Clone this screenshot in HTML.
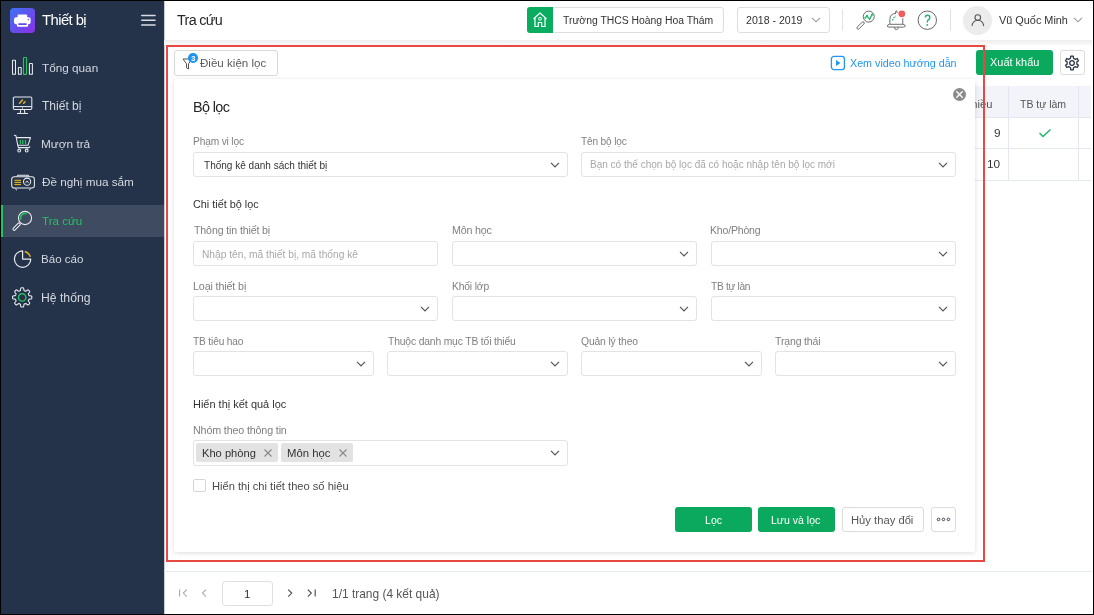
<!DOCTYPE html>
<html><head><meta charset="utf-8">
<style>
*{box-sizing:border-box;margin:0;padding:0}
html,body{width:1094px;height:615px;overflow:hidden;background:#000}
body{position:relative;font-family:"Liberation Sans",sans-serif;color:#333}
.a{position:absolute}
.t{position:absolute;white-space:nowrap;line-height:1;will-change:transform}
.nt{position:absolute;left:42px;white-space:nowrap;line-height:1;font-size:13px;color:#d9dde4}
.box{position:absolute;border:1px solid #e3e3e3;border-radius:3px;background:#fff}
.lbl{position:absolute;white-space:nowrap;line-height:1;font-size:10.5px;color:#8a8a8a}
.chev{position:absolute}
.btn{position:absolute;border-radius:3px}
</style></head><body>
<div class="a" style="left:1px;top:1px;width:1092px;height:613px;background:#fff"></div>

<!-- SIDEBAR -->
<div class="a" style="left:1px;top:1px;width:163px;height:613px;background:#243349"></div>
<div class="a" style="left:10px;top:8px;width:25px;height:25px;border-radius:4px;background:linear-gradient(135deg,#3b74f3,#8c2ee6)"></div>
<svg class="a" style="left:10px;top:8px" width="25" height="25" viewBox="0 0 25 25">
 <rect x="7.6" y="6.4" width="9.6" height="3.6" rx="1" fill="#fff"/>
 <rect x="4" y="9.3" width="16.7" height="7" rx="2.2" fill="#fff"/>
 <rect x="6.9" y="14" width="11.2" height="4.8" rx="1" fill="#fff"/>
 <rect x="8.3" y="15.2" width="8.4" height="1.8" rx="0.4" fill="#5f4ce8"/>
 <circle cx="18.4" cy="11.6" r="0.8" fill="#7a63ea"/>
</svg>
<svg class="a" style="left:140px;top:13px" width="17" height="15" viewBox="0 0 17 15">
 <g stroke="#d9dde4" stroke-width="1.6" stroke-linecap="round">
  <line x1="1.8" y1="2.5" x2="15" y2="2.5"/>
  <line x1="1.8" y1="7.3" x2="15" y2="7.3"/>
  <line x1="1.8" y1="12" x2="15" y2="12"/>
 </g>
</svg>

<!-- Tong quan -->
<svg class="a" style="left:10px;top:55px" width="26" height="22" viewBox="0 0 26 22">
 <g fill="none" stroke="#e8ebf0" stroke-width="1.05">
  <rect x="2.5" y="5.3" width="3" height="14" rx="0.4"/>
  <rect x="8.4" y="12.5" width="2.8" height="6.8" rx="0.4"/>
  <rect x="19.4" y="8.5" width="3" height="10.8" rx="0.4"/>
 </g>
 <rect x="13.5" y="2.5" width="3" height="16.8" rx="0.4" fill="none" stroke="#22c55e" stroke-width="1.15"/>
</svg>
<!-- Thiet bi -->
<svg class="a" style="left:10px;top:94px" width="26" height="22" viewBox="0 0 26 22">
 <g fill="none" stroke="#e8ebf0" stroke-width="1.05">
  <rect x="3.3" y="2.9" width="18.5" height="12.6" rx="1.2"/>
  <line x1="3.3" y1="12.6" x2="21.8" y2="12.6"/>
  <path d="M10.8 15.5 L10.2 19.3 M14.3 15.5 L14.9 19.3"/>
  <line x1="7" y1="19.5" x2="18" y2="19.5"/>
 </g>
 <line x1="12.5" y1="12.6" x2="12.5" y2="15" stroke="#e8ebf0" stroke-width="0.6"/>
 <g stroke="#e0b422" stroke-width="1.5" stroke-linecap="round">
  <line x1="9.5" y1="9.3" x2="12.5" y2="6.1"/>
  <line x1="13.6" y1="9.3" x2="15" y2="7.9"/>
 </g>
</svg>
<!-- Muon tra -->
<svg class="a" style="left:10px;top:131px" width="26" height="22" viewBox="0 0 26 22">
 <g fill="none" stroke="#e8ebf0" stroke-width="1.05" stroke-linejoin="round">
  <path d="M3.9 4.3 L5.9 4.6 L7.8 14.3 L8.4 16.6 L19 16.6 Q20.2 16.3 19.6 15.2"/>
  <path d="M6.4 6.6 L20.5 6.6 L18 14.3 L7.8 14.3"/>
  <circle cx="9.2" cy="19.5" r="1.4"/>
  <circle cx="16.7" cy="19.5" r="1.4"/>
 </g>
 <g stroke="#22c55e" stroke-width="1.3">
  <line x1="10.3" y1="9" x2="10.3" y2="13"/>
  <line x1="12.8" y1="9" x2="12.8" y2="13"/>
  <line x1="15.5" y1="9" x2="15.5" y2="13"/>
 </g>
</svg>
<!-- De nghi -->
<svg class="a" style="left:10px;top:171px" width="28" height="22" viewBox="0 0 28 22">
 <g fill="none" stroke="#e8ebf0" stroke-width="1.05">
  <rect x="1.7" y="5.7" width="22.7" height="11.3" rx="2.5"/>
  <path d="M6.9 5.5 L7.8 4.3 L18.2 4.3 L19.1 5.5"/>
  <circle cx="17.1" cy="10.7" r="3.6"/>
  <path d="M15.5 12.2 L17.1 9.9 L18.7 12.2" stroke-width="0.8"/>
  <path d="M5.3 17.4 Q5.8 19 7 19 M20.8 17.4 Q20.3 19 19.1 19" stroke-width="0.9"/>
 </g>
 <g stroke="#d9ad22" stroke-width="1.2">
  <line x1="4.4" y1="9.3" x2="11" y2="9.3"/>
  <line x1="4.4" y1="11.4" x2="11" y2="11.4"/>
  <line x1="4.4" y1="13.5" x2="11" y2="13.5"/>
 </g>
</svg>
<!-- Tra cuu active -->
<div class="a" style="left:1px;top:205px;width:163px;height:32px;background:#3e4b60"></div>
<div class="a" style="left:1px;top:205px;width:2px;height:32px;background:#22c55e"></div>
<svg class="a" style="left:10px;top:208px" width="26" height="26" viewBox="0 0 26 26">
 <g fill="none" stroke="#e8ebf0" stroke-width="1.1">
  <circle cx="15" cy="10" r="6.6"/>
  <rect x="-4.6" y="-1.3" width="9.2" height="2.6" rx="1.3" transform="translate(6.6 18.6) rotate(-45)"/>
 </g>
 <path d="M10.9 11.6 A4.5 4.5 0 0 1 16.5 5.6" fill="none" stroke="#22c55e" stroke-width="1.7"/>
</svg>
<!-- Bao cao -->
<svg class="a" style="left:10px;top:247px" width="26" height="24" viewBox="0 0 26 24">
 <path d="M12.6 3.9 A8.2 8.2 0 1 0 20.8 12.1 L12.6 12.1 Z" fill="none" stroke="#e8ebf0" stroke-width="1.2" stroke-linejoin="round"/>
 <path d="M14.8 4.5 A8 8 0 0 1 20.3 9.9" fill="none" stroke="#e0b422" stroke-width="1.4"/>
</svg>
<!-- He thong -->
<svg class="a" style="left:10px;top:285px" width="24" height="24" viewBox="0 0 24 24">
 <path fill="none" stroke="#e8ebf0" stroke-width="1.1" stroke-linejoin="round" d="M21.85 12.40 L21.84 12.78 L21.79 13.15 L21.66 13.52 L21.27 13.84 L20.34 14.02 L19.41 14.13 L19.00 14.32 L18.84 14.56 L18.73 14.81 L18.62 15.06 L18.52 15.31 L18.42 15.57 L18.37 15.85 L18.52 16.27 L19.10 17.01 L19.63 17.80 L19.68 18.30 L19.52 18.65 L19.28 18.95 L19.02 19.22 L18.75 19.48 L18.45 19.72 L18.10 19.88 L17.60 19.83 L16.81 19.30 L16.07 18.72 L15.65 18.57 L15.37 18.62 L15.11 18.72 L14.86 18.82 L14.61 18.93 L14.36 19.04 L14.12 19.20 L13.93 19.61 L13.82 20.54 L13.64 21.47 L13.32 21.86 L12.95 21.99 L12.58 22.04 L12.20 22.05 L11.82 22.04 L11.45 21.99 L11.08 21.86 L10.76 21.47 L10.58 20.54 L10.47 19.61 L10.28 19.20 L10.04 19.04 L9.79 18.93 L9.54 18.82 L9.29 18.72 L9.03 18.62 L8.75 18.57 L8.33 18.72 L7.59 19.30 L6.80 19.83 L6.30 19.88 L5.95 19.72 L5.65 19.48 L5.38 19.22 L5.12 18.95 L4.88 18.65 L4.72 18.30 L4.77 17.80 L5.30 17.01 L5.88 16.27 L6.03 15.85 L5.98 15.57 L5.88 15.31 L5.78 15.06 L5.67 14.81 L5.56 14.56 L5.40 14.32 L4.99 14.13 L4.06 14.02 L3.13 13.84 L2.74 13.52 L2.61 13.15 L2.56 12.78 L2.55 12.40 L2.56 12.02 L2.61 11.65 L2.74 11.28 L3.13 10.96 L4.06 10.78 L4.99 10.67 L5.40 10.48 L5.56 10.24 L5.67 9.99 L5.78 9.74 L5.88 9.49 L5.98 9.23 L6.03 8.95 L5.88 8.53 L5.30 7.79 L4.77 7.00 L4.72 6.50 L4.88 6.15 L5.12 5.85 L5.38 5.58 L5.65 5.32 L5.95 5.08 L6.30 4.92 L6.80 4.97 L7.59 5.50 L8.33 6.08 L8.75 6.23 L9.03 6.18 L9.29 6.08 L9.54 5.98 L9.79 5.87 L10.04 5.76 L10.28 5.60 L10.47 5.19 L10.58 4.26 L10.76 3.33 L11.08 2.94 L11.45 2.81 L11.82 2.76 L12.20 2.75 L12.58 2.76 L12.95 2.81 L13.32 2.94 L13.64 3.33 L13.82 4.26 L13.93 5.19 L14.12 5.60 L14.36 5.76 L14.61 5.87 L14.86 5.98 L15.11 6.08 L15.37 6.18 L15.65 6.23 L16.07 6.08 L16.81 5.50 L17.60 4.97 L18.10 4.92 L18.45 5.08 L18.75 5.32 L19.02 5.58 L19.28 5.85 L19.52 6.15 L19.68 6.50 L19.63 7.00 L19.10 7.79 L18.52 8.53 L18.37 8.95 L18.42 9.23 L18.52 9.49 L18.62 9.74 L18.73 9.99 L18.84 10.24 L19.00 10.48 L19.41 10.67 L20.34 10.78 L21.27 10.96 L21.66 11.28 L21.79 11.65 L21.84 12.02 Z"/>
 <circle cx="12.2" cy="12.4" r="3.7" fill="none" stroke="#22c55e" stroke-width="1.4"/>
</svg>

<div class="a" style="left:164px;top:1px;width:1px;height:613px;background:linear-gradient(90deg,#aeb4bd,#e6e8eb)"></div>
<!-- HEADER -->
<div class="a" style="left:164px;top:40px;width:928px;height:5px;background:linear-gradient(#eeeeee,#f9f9f9)"></div>
<!-- school -->
<div class="box" style="left:527px;top:7px;width:197px;height:26px;border-color:#dedede"></div>
<div class="a" style="left:527px;top:7px;width:26px;height:26px;background:#0aad60;border-radius:3px 0 0 3px"></div>
<svg class="a" style="left:531px;top:10px" width="18" height="20" viewBox="0 0 18 20">
 <path d="M2.5 9 L9 3 L15.5 9 M4 8 L4 16.5 L7.3 16.5 L7.3 12.5 L10.7 12.5 L10.7 16.5 L14 16.5 L14 8" fill="none" stroke="#fff" stroke-width="1.2" stroke-linejoin="round"/>
 <rect x="7.8" y="7.5" width="2.4" height="2.6" rx="0.4" fill="none" stroke="#fff" stroke-width="1"/>
</svg>
<!-- year -->
<div class="box" style="left:737px;top:7px;width:93px;height:26px;border-color:#dedede"></div>
<svg class="a" style="left:811px;top:17px" width="10" height="6" viewBox="0 0 10 6"><path d="M1 0.8 L5 4.8 L9 0.8" fill="none" stroke="#999" stroke-width="1.1"/></svg>
<div class="a" style="left:842px;top:9px;width:1px;height:22px;background:#e3e3e3"></div>
<!-- search chart icon -->
<svg class="a" style="left:854px;top:8px" width="24" height="24" viewBox="0 0 24 24">
 <circle cx="14.75" cy="8.6" r="5.5" fill="none" stroke="#666" stroke-width="1"/>
 <rect x="-4.7" y="-1.25" width="9.4" height="2.5" rx="1.25" fill="none" stroke="#666" stroke-width="0.9" transform="translate(6.6 17.5) rotate(-45)"/>
 <path d="M11.3 9.8 L13 7.8 L15.6 11.4 L18.2 6.4" fill="none" stroke="#1fb36b" stroke-width="1.2" stroke-linejoin="round"/>
 <circle cx="11.3" cy="9.8" r="1" fill="#1fb36b"/><circle cx="13" cy="7.8" r="1" fill="#1fb36b"/><circle cx="18.2" cy="6.4" r="1" fill="#1fb36b"/>
</svg>
<!-- bell -->
<svg class="a" style="left:884px;top:6px" width="26" height="26" viewBox="0 0 26 26">
 <g fill="none" stroke="#6e6e6e" stroke-width="1">
  <path d="M5.9 18 L5.9 13.5 Q5.9 7.6 12 7.4"/>
  <path d="M11.2 7 L12.3 4.6 L13.4 7"/>
  <path d="M18.8 12.3 L18.8 18"/>
  <path d="M5.5 18.3 L18.9 18.3 Q21.6 18.8 21.3 20 Q21 21.1 19.5 21.1 L5 21.1 Q3.5 21.1 3.3 20 Q3.3 18.8 5.5 18.3 Z"/>
  <path d="M10.5 21.3 Q10.5 23.6 12.4 23.6 Q14.3 23.6 14.3 21.3"/>
 </g>
 <path d="M8.5 14.5 Q9.3 11.2 12 10" fill="none" stroke="#1fb36b" stroke-width="1.2" stroke-dasharray="1.6 1"/>
 <circle cx="17.8" cy="7.8" r="3.4" fill="#f45b5b"/>
</svg>
<!-- help -->
<svg class="a" style="left:917px;top:10px" width="21" height="21" viewBox="0 0 21 21">
 <circle cx="10.3" cy="10.2" r="9.2" fill="none" stroke="#555" stroke-width="0.9"/>
 <path d="M8.3 7.6 Q8.3 5.3 10.5 5.3 Q12.8 5.3 12.8 7.4 Q12.8 8.8 11.3 9.8 Q10.3 10.5 10.3 12.6" fill="none" stroke="#1fb36b" stroke-width="1.4"/>
 <circle cx="10.25" cy="14.9" r="0.95" fill="#1fb36b"/>
</svg>
<div class="a" style="left:950px;top:9px;width:1px;height:22px;background:#e3e3e3"></div>
<!-- avatar -->
<div class="a" style="left:963px;top:6px;width:29px;height:29px;border-radius:50%;background:#ececec"></div>
<svg class="a" style="left:968px;top:11px" width="19" height="19" viewBox="0 0 19 19">
 <circle cx="9.8" cy="6.6" r="2.8" fill="none" stroke="#555" stroke-width="1.1"/>
 <path d="M4.1 14.6 A5.75 5.3 0 0 1 15.6 14.6" fill="none" stroke="#555" stroke-width="1.1" stroke-linecap="round"/>
</svg>
<svg class="a" style="left:1073px;top:17px" width="10" height="6" viewBox="0 0 10 6"><path d="M1 0.8 L5 4.8 L9 0.8" fill="none" stroke="#999" stroke-width="1.1"/></svg>

<!-- TABLE (behind panel) -->
<div class="a" style="left:174px;top:86px;width:917px;height:32px;background:#f3f4f9;border-bottom:1px solid #e4e7ee"></div>
<div class="a" style="left:174px;top:148px;width:917px;height:1px;background:#e4e7ee"></div>
<div class="a" style="left:174px;top:180px;width:917px;height:1px;background:#e4e7ee"></div>
<div class="t" style="left:964.5px;top:98.6px;font-size:11.2px;color:#555">nhiều</div>
<div class="a" style="left:1008px;top:86px;width:1px;height:95px;background:#e6e6f2"></div>
<div class="a" style="left:1078px;top:86px;width:1px;height:95px;background:#e6e6f2"></div>
<svg class="a" style="left:1038px;top:128px" width="14" height="10" viewBox="0 0 14 10"><path d="M1.5 5 L5 8.5 L12.5 1.5" fill="none" stroke="#1fb36b" stroke-width="1.4"/></svg>

<!-- TOOLBAR -->
<div class="btn" style="left:174px;top:50px;width:104px;height:26px;border:1px solid #d9d9d9;background:#fff"></div>
<svg class="a" style="left:182px;top:57px" width="12" height="14" viewBox="0 0 12 14">
 <path d="M1 2 L10 2 L6.5 6.8 L6.5 12 L4.5 10.8 L4.5 6.8 Z" fill="none" stroke="#555" stroke-width="1" stroke-linejoin="round"/>
</svg>
<div class="a" style="left:188px;top:52.8px;width:10px;height:10px;border-radius:50%;background:#1b94f0"></div>
<svg class="a" style="left:188px;top:52.8px" width="10" height="10" viewBox="0 0 10 10"><text x="5.1" y="7.9" text-anchor="middle" font-family="Liberation Sans" font-size="7.5" font-weight="bold" fill="#fff">3</text></svg>

<svg class="a" style="left:830px;top:55px" width="16" height="16" viewBox="0 0 16 16">
 <rect x="1.4" y="1.4" width="13" height="13.2" rx="2.6" fill="none" stroke="#2196f3" stroke-width="1.3"/>
 <path d="M6 5 L10.5 8 L6 11 Z" fill="#2196f3"/>
</svg>
<div class="btn" style="left:976px;top:50px;width:77px;height:25px;background:#0aa95e"></div>
<div class="btn" style="left:1060px;top:50px;width:25px;height:25px;border:1px solid #dcdcdc;background:#fff"></div>
<svg class="a" style="left:1060.4px;top:50.8px" width="24" height="24" viewBox="0 0 24 24">
 <path fill="none" stroke="#2f3445" stroke-width="1.3" stroke-linejoin="round" d="M10.55 7.21 L10.71 5.22 L13.29 5.22 L13.45 7.21 L15.42 8.36 L17.22 7.49 L18.52 9.73 L16.87 10.86 L16.87 13.14 L18.52 14.27 L17.22 16.51 L15.42 15.64 L13.45 16.79 L13.29 18.78 L10.71 18.78 L10.55 16.79 L8.58 15.64 L6.78 16.51 L5.48 14.27 L7.13 13.14 L7.13 10.86 L5.48 9.73 L6.78 7.49 L8.58 8.36 Z"/>
 <circle cx="12" cy="12" r="2.3" fill="none" stroke="#2f3445" stroke-width="1.3"/>
</svg>

<!-- PANEL -->
<div class="a" style="left:174px;top:79px;width:801px;height:473px;background:#fff;border-radius:3px;box-shadow:0 1px 5px rgba(0,0,0,0.14)"></div>
<svg class="a" style="left:952px;top:87px" width="15" height="15" viewBox="0 0 15 15">
 <circle cx="7.5" cy="7.5" r="6.5" fill="#8a8a8a"/>
 <path d="M4.3 4.3 L10.7 10.7 M10.7 4.3 L4.3 10.7" stroke="#fff" stroke-width="1.3"/>
</svg>

<div class="box" style="left:193px;top:152px;width:375px;height:25px"></div>
<div class="box" style="left:581px;top:152px;width:375px;height:25px"></div>


<div class="box" style="left:193px;top:241px;width:245px;height:25px"></div>
<div class="box" style="left:452px;top:241px;width:245px;height:25px"></div>
<div class="box" style="left:711px;top:241px;width:245px;height:25px"></div>

<div class="box" style="left:193px;top:296px;width:245px;height:25px"></div>
<div class="box" style="left:452px;top:296px;width:245px;height:25px"></div>
<div class="box" style="left:711px;top:296px;width:245px;height:25px"></div>

<div class="box" style="left:193px;top:351px;width:181px;height:25px"></div>
<div class="box" style="left:387px;top:351px;width:181px;height:25px"></div>
<div class="box" style="left:581px;top:351px;width:181px;height:25px"></div>
<div class="box" style="left:775px;top:351px;width:181px;height:25px"></div>

<div class="box" style="left:193px;top:440px;width:375px;height:26px"></div>
<div class="a" style="left:196px;top:443px;width:82px;height:19px;background:#e2e2e2;border-radius:2px"></div>
<svg class="a" style="left:263px;top:448px" width="10" height="10" viewBox="0 0 10 10"><path d="M1.5 1.5 L8.5 8.5 M8.5 1.5 L1.5 8.5" stroke="#888" stroke-width="1.1"/></svg>
<div class="a" style="left:281px;top:443px;width:72px;height:19px;background:#e2e2e2;border-radius:2px"></div>
<svg class="a" style="left:338px;top:448px" width="10" height="10" viewBox="0 0 10 10"><path d="M1.5 1.5 L8.5 8.5 M8.5 1.5 L1.5 8.5" stroke="#888" stroke-width="1.1"/></svg>

<div class="a" style="left:193px;top:479px;width:13px;height:13px;border:1px solid #d6d6d6;border-radius:2px;background:#fff"></div>

<div class="btn" style="left:675px;top:507px;width:77px;height:25px;background:#0aa95e"></div>
<div class="btn" style="left:758px;top:507px;width:77px;height:25px;background:#0aa95e"></div>
<div class="btn" style="left:842px;top:507px;width:82px;height:25px;border:1px solid #dcdcdc;background:#fff"></div>
<div class="btn" style="left:931px;top:507px;width:25px;height:25px;border:1px solid #dcdcdc;background:#fff"></div>
<svg class="a" style="left:936px;top:516px" width="16" height="7" viewBox="0 0 16 7">
 <circle cx="2.5" cy="3.4" r="1.3" fill="none" stroke="#3d4256" stroke-width="1"/>
 <circle cx="7.4" cy="3.4" r="1.3" fill="none" stroke="#3d4256" stroke-width="1"/>
 <circle cx="12.4" cy="3.4" r="1.3" fill="none" stroke="#3d4256" stroke-width="1"/>
</svg>

<svg class="a" style="left:550px;top:161.5px" width="10" height="6" viewBox="0 0 10 6"><path d="M1 0.8 L5 4.8 L9 0.8" fill="none" stroke="#555" stroke-width="1.2"/></svg>
<svg class="a" style="left:938px;top:161.5px" width="10" height="6" viewBox="0 0 10 6"><path d="M1 0.8 L5 4.8 L9 0.8" fill="none" stroke="#555" stroke-width="1.2"/></svg>
<svg class="a" style="left:679px;top:250.5px" width="10" height="6" viewBox="0 0 10 6"><path d="M1 0.8 L5 4.8 L9 0.8" fill="none" stroke="#555" stroke-width="1.2"/></svg>
<svg class="a" style="left:938px;top:250.5px" width="10" height="6" viewBox="0 0 10 6"><path d="M1 0.8 L5 4.8 L9 0.8" fill="none" stroke="#555" stroke-width="1.2"/></svg>
<svg class="a" style="left:420px;top:305.5px" width="10" height="6" viewBox="0 0 10 6"><path d="M1 0.8 L5 4.8 L9 0.8" fill="none" stroke="#555" stroke-width="1.2"/></svg>
<svg class="a" style="left:679px;top:305.5px" width="10" height="6" viewBox="0 0 10 6"><path d="M1 0.8 L5 4.8 L9 0.8" fill="none" stroke="#555" stroke-width="1.2"/></svg>
<svg class="a" style="left:938px;top:305.5px" width="10" height="6" viewBox="0 0 10 6"><path d="M1 0.8 L5 4.8 L9 0.8" fill="none" stroke="#555" stroke-width="1.2"/></svg>
<svg class="a" style="left:356px;top:360.5px" width="10" height="6" viewBox="0 0 10 6"><path d="M1 0.8 L5 4.8 L9 0.8" fill="none" stroke="#555" stroke-width="1.2"/></svg>
<svg class="a" style="left:550px;top:360.5px" width="10" height="6" viewBox="0 0 10 6"><path d="M1 0.8 L5 4.8 L9 0.8" fill="none" stroke="#555" stroke-width="1.2"/></svg>
<svg class="a" style="left:744px;top:360.5px" width="10" height="6" viewBox="0 0 10 6"><path d="M1 0.8 L5 4.8 L9 0.8" fill="none" stroke="#555" stroke-width="1.2"/></svg>
<svg class="a" style="left:938px;top:360.5px" width="10" height="6" viewBox="0 0 10 6"><path d="M1 0.8 L5 4.8 L9 0.8" fill="none" stroke="#555" stroke-width="1.2"/></svg>
<svg class="a" style="left:550px;top:450.0px" width="10" height="6" viewBox="0 0 10 6"><path d="M1 0.8 L5 4.8 L9 0.8" fill="none" stroke="#555" stroke-width="1.2"/></svg>
<!-- RED ANNOTATION -->
<div class="a" style="left:166px;top:45px;width:819px;height:517px;border:2px solid #e84842"></div>

<!-- PAGINATION -->
<div class="a" style="left:164px;top:571px;width:928px;height:1px;background:#e6e8f0"></div>
<svg class="a" style="left:177px;top:587px" width="12" height="12" viewBox="0 0 12 12">
 <path d="M2.6 2.6 L2.6 9.6 M9.8 2.6 L6.3 6.1 L9.8 9.6" fill="none" stroke="#aaa" stroke-width="1.1"/>
</svg>
<svg class="a" style="left:199px;top:587px" width="10" height="12" viewBox="0 0 10 12">
 <path d="M7 2.6 L3.5 6.1 L7 9.6" fill="none" stroke="#aaa" stroke-width="1.1"/>
</svg>
<div class="box" style="left:222px;top:581px;width:51px;height:25px;border-color:#e0e0e0"></div>
<svg class="a" style="left:285px;top:587px" width="10" height="12" viewBox="0 0 10 12">
 <path d="M3.2 2.6 L6.7 6.1 L3.2 9.6" fill="none" stroke="#555" stroke-width="1.2"/>
</svg>
<svg class="a" style="left:305px;top:587px" width="12" height="12" viewBox="0 0 12 12">
 <path d="M2.8 2.6 L6.3 6.1 L2.8 9.6 M10.2 2.6 L10.2 9.6" fill="none" stroke="#555" stroke-width="1.2"/>
</svg>
<div class="t" style="left:41.50px;top:13px;font-size:14.80px;color:#ffffff;letter-spacing:-0.56px">Thiết bị</div>
<div class="t" style="left:41.76px;top:62px;font-size:11.75px;color:#d3d8e0">Tổng quan</div>
<div class="t" style="left:41.66px;top:100px;font-size:12.04px;color:#d3d8e0">Thiết bị</div>
<div class="t" style="left:40.95px;top:139px;font-size:11.83px;color:#d3d8e0">Mượn trả</div>
<div class="t" style="left:41.80px;top:176px;font-size:11.73px;color:#d3d8e0">Đề nghị mua sắm</div>
<div class="t" style="left:41.57px;top:215px;font-size:11.60px;color:#22c55e">Tra cứu</div>
<div class="t" style="left:40.97px;top:254px;font-size:11.59px;color:#d3d8e0">Báo cáo</div>
<div class="t" style="left:40.93px;top:292px;font-size:12.19px;color:#d3d8e0">Hệ thống</div>
<div class="t" style="left:177.21px;top:13px;font-size:14.35px;color:#262626;letter-spacing:-0.67px">Tra cứu</div>
<div class="t" style="left:563.29px;top:16px;font-size:10.39px;color:#333333">Trường THCS Hoàng Hoa Thám</div>
<div class="t" style="left:746.07px;top:15px;font-size:10.59px;color:#333333">2018 - 2019</div>
<div class="t" style="left:998.60px;top:15px;font-size:10.88px;color:#333333">Vũ Quốc Minh</div>
<div class="t" style="left:199.80px;top:58px;font-size:11.59px;color:#5a5a5a">Điều kiện lọc</div>
<div class="t" style="left:850.09px;top:58px;font-size:10.72px;color:#2196f3">Xem video hướng dẫn</div>
<div class="t" style="left:989.98px;top:57px;font-size:10.96px;color:#ffffff">Xuất khẩu</div>
<div class="t" style="left:1020.49px;top:99px;font-size:10.51px;color:#555555">TB tự làm</div>
<div class="t" style="left:993.65px;top:128px;font-size:11.80px;color:#333333">9</div>
<div class="t" style="left:987.24px;top:159px;font-size:11.80px;color:#333333">10</div>
<div class="t" style="left:192.64px;top:100px;font-size:14.44px;color:#262626;letter-spacing:-0.64px">Bộ lọc</div>
<div class="t" style="left:192.99px;top:137px;font-size:10.18px;color:#808080;letter-spacing:-0.15px">Phạm vi lọc</div>
<div class="t" style="left:581.00px;top:137px;font-size:10.10px;color:#808080;letter-spacing:-0.15px">Tên bộ lọc</div>
<div class="t" style="left:203.50px;top:161px;font-size:10.04px;color:#333333">Thống kê danh sách thiết bị</div>
<div class="t" style="left:589.90px;top:160px;font-size:10.03px;color:#a8a8a8">Bạn có thể chọn bộ lọc đã có hoặc nhập tên bộ lọc mới</div>
<div class="t" style="left:193.46px;top:199px;font-size:10.85px;color:#333333">Chi tiết bộ lọc</div>
<div class="t" style="left:193.89px;top:225px;font-size:10.61px;color:#808080;letter-spacing:-0.13px">Thông tin thiết bị</div>
<div class="t" style="left:451.54px;top:225px;font-size:10.73px;color:#808080;letter-spacing:-0.19px">Môn học</div>
<div class="t" style="left:710.36px;top:225px;font-size:10.53px;color:#808080;letter-spacing:-0.18px">Kho/Phòng</div>
<div class="t" style="left:202.38px;top:250px;font-size:10.21px;color:#a8a8a8">Nhập tên, mã thiết bị, mã thống kê</div>
<div class="t" style="left:192.94px;top:281px;font-size:10.73px;color:#808080;letter-spacing:-0.13px">Loại thiết bị</div>
<div class="t" style="left:451.58px;top:282px;font-size:10.31px;color:#808080;letter-spacing:-0.15px">Khối lớp</div>
<div class="t" style="left:711.00px;top:282px;font-size:10.18px;color:#808080;letter-spacing:-0.31px">TB tự làn</div>
<div class="t" style="left:193.30px;top:337px;font-size:10.18px;color:#808080;letter-spacing:-0.15px">TB tiêu hao</div>
<div class="t" style="left:387.99px;top:337px;font-size:10.32px;color:#808080;letter-spacing:-0.15px">Thuộc danh mục TB tối thiểu</div>
<div class="t" style="left:581.39px;top:337px;font-size:10.35px;color:#808080;letter-spacing:-0.15px">Quản lý theo</div>
<div class="t" style="left:775.19px;top:336px;font-size:10.53px;color:#808080;letter-spacing:-0.15px">Trạng thái</div>
<div class="t" style="left:193.12px;top:399px;font-size:10.98px;color:#333333">Hiển thị kết quả lọc</div>
<div class="t" style="left:193.14px;top:425px;font-size:10.72px;color:#808080;letter-spacing:-0.15px">Nhóm theo thông tin</div>
<div class="t" style="left:202.21px;top:448px;font-size:11.14px;color:#333333">Kho phòng</div>
<div class="t" style="left:286.89px;top:448px;font-size:11.32px;color:#333333">Môn học</div>
<div class="t" style="left:212.11px;top:481px;font-size:11.14px;color:#4a4a4a">Hiển thị chi tiết theo số hiệu</div>
<div class="t" style="left:704.95px;top:515px;font-size:10.58px;color:#ffffff">Lọc</div>
<div class="t" style="left:770.75px;top:515px;font-size:10.56px;color:#ffffff">Lưu và lọc</div>
<div class="t" style="left:851.00px;top:515px;font-size:11.23px;color:#555555">Hủy thay đổi</div>
<div class="t" style="left:243.97px;top:589px;font-size:11.50px;color:#333333">1</div>
<div class="t" style="left:332.36px;top:589px;font-size:11.95px;color:#555555">1/1 trang (4 kết quả)</div>
</body></html>
